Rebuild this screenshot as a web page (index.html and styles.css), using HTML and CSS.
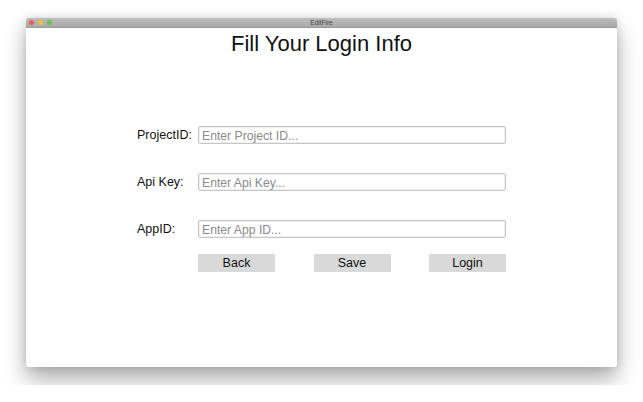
FILE: index.html
```html
<!DOCTYPE html>
<html lang="en">
<head>
	<meta charset="UTF-8">
	<meta name="viewport" content="width=device-width, initial-scale=1.0">
	<title>EditFire</title>
	<link rel="stylesheet" href="styles.css">
</head>
<body>

	<div class="window">
		<div class="titlebar">
			<div class="lights">
				<span class="light red"></span>
				<span class="light yellow"></span>
				<span class="light green"></span>
			</div>
			<div class="title">EditFire</div>
		</div>

		<div class="content">
			<h1>Fill Your Login Info</h1>

			<form class="login">
				<label for="projectId">ProjectID:</label>
				<input type="text" id="projectId" placeholder="Enter Project ID...">

				<label for="apiKey">Api Key:</label>
				<input type="text" id="apiKey" placeholder="Enter Api Key...">

				<label for="appId">AppID:</label>
				<input type="text" id="appId" placeholder="Enter App ID...">

				<div class="buttons">
					<button type="button">Back</button>
					<button type="button">Save</button>
					<button type="submit">Login</button>
				</div>
			</form>
		</div>
	</div>

</body>
</html>
```

FILE: styles.css
```css
* {
	box-sizing: border-box;
}
body {
	font-family: "Liberation Sans", Arial, sans-serif;
	margin: 0;
	padding: 18px 26px;
	background: #fff;
}
.window {
	width: 591px;
	height: 349px;
	background: #fff;
	border-radius: 3px;
	overflow: hidden;
	box-shadow: 0 12px 22px rgba(0, 0, 0, 0.32), 0 0 8px rgba(0, 0, 0, 0.12);
}
.titlebar {
	position: relative;
	height: 10px;
	background: linear-gradient(#bdbdbd, #a9a9a9);
	border-bottom: 1px solid #999;
}
.lights {
	position: absolute;
	left: 3px;
	top: 2px;
	display: flex;
	gap: 4px;
}
.light {
	width: 5px;
	height: 5px;
	border-radius: 50%;
}
.red {
	background: #ee5c54;
}
.yellow {
	background: #f3bd37;
}
.green {
	background: #5fc847;
}
.title {
	text-align: center;
	font-size: 6.5px;
	line-height: 9px;
	color: #444;
}
.content {
	padding-top: 3px;
}
h1 {
	margin: 0;
	text-align: center;
	font-size: 22px;
	font-weight: normal;
	line-height: 26px;
	color: #111;
}
.login {
	margin: 69px 0 0 111px;
	display: grid;
	grid-template-columns: 61px 308px;
	row-gap: 29px;
	align-items: center;
}
label {
	font-size: 12.5px;
	color: #111;
}
input {
	height: 18px;
	width: 100%;
	padding: 1px 3px 0;
	border: 1px solid #c6c6c6;
	border-radius: 2px;
	font-family: inherit;
	font-size: 12.2px;
	color: #222;
	box-shadow: inset 0 0 0 1px #f0f0f0;
}
input::placeholder {
	color: #8a8a8a;
}
.buttons {
	grid-column: 2;
	margin-top: -13px;
	display: flex;
	justify-content: space-between;
}
button {
	width: 77px;
	height: 18px;
	padding: 0;
	border: none;
	background: #d9d9d9;
	font-family: inherit;
	font-size: 12.5px;
	color: #111;
}
```
